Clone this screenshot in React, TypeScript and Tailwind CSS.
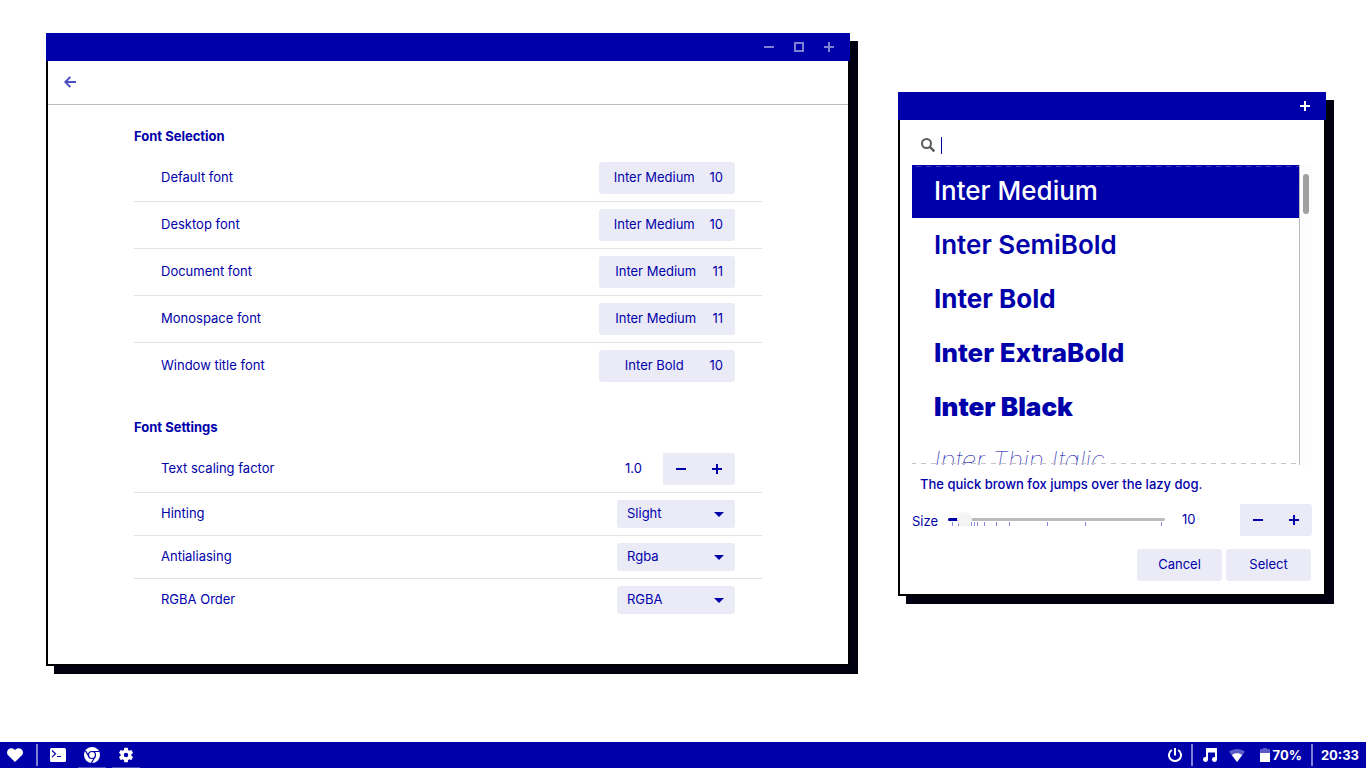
import { useState } from "react";
import type { ReactNode } from "react";

const FONT_ROWS = [
  { label: "Default font", name: "Inter Medium", size: 10 },
  { label: "Desktop font", name: "Inter Medium", size: 10 },
  { label: "Document font", name: "Inter Medium", size: 11 },
  { label: "Monospace font", name: "Inter Medium", size: 11 },
  { label: "Window title font", name: "Inter Bold", size: 10 },
];

const SELECT_ROWS = [
  { id: "hinting", label: "Hinting", options: ["Slight", "None", "Medium", "Full"] },
  { id: "antialiasing", label: "Antialiasing", options: ["Rgba", "Grayscale", "None"] },
  { id: "rgba-order", label: "RGBA Order", options: ["RGBA", "BGR", "VRGB", "VBGR"] },
];

const FONT_LIST = [
  { name: "Inter Medium", style: "font-medium" },
  { name: "Inter SemiBold", style: "font-semibold" },
  { name: "Inter Bold", style: "font-bold" },
  { name: "Inter ExtraBold", style: "font-extrabold" },
  { name: "Inter Black", style: "font-black" },
  { name: "Inter Thin Italic", style: "font-thin italic" },
];

const MIN_SIZE = 6;
const MAX_SIZE = 72;
const SIZE_MARKS = [6, 8, 9, 10, 11, 12, 13, 14, 16, 20, 24, 36, 48, 72];

function MinusIcon() {
  return (
    <svg className="size-[10px]" viewBox="0 0 10 10" fill="currentColor" aria-hidden="true">
      <path d="M0 4h10v2H0z" />
    </svg>
  );
}

function PlusIcon() {
  return (
    <svg className="size-[10px]" viewBox="0 0 10 10" fill="currentColor" aria-hidden="true">
      <path d="M4 0h2v4h4v2H6v4H4V6H0V4h4z" />
    </svg>
  );
}

function SquareIcon() {
  return (
    <svg className="size-[10px]" viewBox="0 0 10 10" fill="none" stroke="currentColor" strokeWidth={2} aria-hidden="true">
      <path d="M1 1h8v8H1z" />
    </svg>
  );
}

function Window({
  label,
  className,
  controls,
  children,
}: {
  label: string;
  className: string;
  controls: ReactNode;
  children: ReactNode;
}) {
  return (
    <section aria-label={label} className={`absolute shadow-[8px_8px_0_0_#000010] ${className}`}>
      <div className="flex h-7 items-center justify-end gap-5 bg-[#0000aa] px-4">
        {controls}
      </div>
      <div className="border-x-2 border-b-2 border-black bg-white">{children}</div>
    </section>
  );
}

function StepButtons({ onStep }: { onStep: (delta: number) => void }) {
  return (
    <div className="flex h-8 overflow-hidden rounded-r-[3px] bg-[#ebebf7]">
      <button
        type="button"
        aria-label="Decrease"
        onClick={() => onStep(-1)}
        className="flex w-9 items-center justify-center"
      >
        <MinusIcon />
      </button>
      <button
        type="button"
        aria-label="Increase"
        onClick={() => onStep(1)}
        className="flex w-9 items-center justify-center"
      >
        <PlusIcon />
      </button>
    </div>
  );
}

function Row({ children }: { children: ReactNode }) {
  return (
    <div className="flex items-center justify-between border-b border-[#e2e2e2] px-[27px] py-[7px] last:border-b-0">
      {children}
    </div>
  );
}

function FontSettings() {
  const [scale, setScale] = useState(1);

  return (
    <Window
      label="Fonts"
      className="top-[33px] left-[46px] w-[804px]"
      controls={
        <div className="flex gap-5 text-[#8080d5]">
          <button type="button" aria-label="Minimize"><MinusIcon /></button>
          <button type="button" aria-label="Maximize"><SquareIcon /></button>
          <button type="button" aria-label="Close"><PlusIcon /></button>
        </div>
      }
    >
      <div className="flex h-11 items-center border-b border-[#bbbbbb] px-4 pb-[2px]">
        <button type="button" aria-label="Back" className="text-[#4d4dc4]">
          <svg className="size-3" viewBox="0 0 12 12" fill="none" stroke="currentColor" strokeWidth={2} aria-hidden="true">
            <path d="M12 6H1.5M6.3 0.9L1.3 6l5 5.1" />
          </svg>
        </button>
      </div>
      <div className="mx-[86px] pt-[19px] pb-[43px]">
        <h2 className="mb-[7px] leading-6 font-bold">Font Selection</h2>
        <div className="mb-[26px]">
          {FONT_ROWS.map((row) => (
            <Row key={row.label}>
              <span>{row.label}</span>
              <button
                type="button"
                aria-label={`${row.label}: ${row.name} ${row.size}`}
                className="flex h-8 w-[136px] items-center rounded-[3px] bg-[#ebebf7] px-3"
              >
                <span className="flex-1 text-center whitespace-nowrap">{row.name}</span>
                <span className="ml-3">{row.size}</span>
              </button>
            </Row>
          ))}
        </div>
        <h2 className="mb-[7px] leading-6 font-bold">Font Settings</h2>
        <div>
          <Row>
            <label htmlFor="scaling">Text scaling factor</label>
            <div className="flex">
              <input
                id="scaling"
                value={scale.toFixed(1)}
                readOnly
                className="w-[46px] pl-2 outline-none"
              />
              <StepButtons onStep={(d) => setScale((s) => s + d / 10)} />
            </div>
          </Row>
          {SELECT_ROWS.map((row) => (
            <Row key={row.id}>
              <label htmlFor={row.id}>{row.label}</label>
              <div className="relative">
                <select
                  id={row.id}
                  className="block h-7 w-[118px] appearance-none rounded-[3px] bg-[#ebebf7] pl-[10px] outline-none"
                >
                  {row.options.map((o) => (
                    <option key={o}>{o}</option>
                  ))}
                </select>
                <svg
                  className="pointer-events-none absolute top-3 right-[11px] h-[5px] w-[10px]"
                  viewBox="0 0 10 5"
                  fill="currentColor"
                  aria-hidden="true"
                >
                  <path d="M0 0h10L5 5z" />
                </svg>
              </div>
            </Row>
          ))}
        </div>
      </div>
    </Window>
  );
}

function FontChooser() {
  const [size, setSize] = useState(10);
  const [selected, setSelected] = useState("Inter Medium");
  const percent = ((size - MIN_SIZE) / (MAX_SIZE - MIN_SIZE)) * 100;

  return (
    <Window
      label="Pick a font"
      className="top-[92px] left-[898px] w-[428px]"
      controls={
        <button type="button" aria-label="Close" className="text-white"><PlusIcon /></button>
      }
    >
      <div className="px-3 pb-[13px]">
        <div className="flex h-[45px] items-center pt-[5px] pl-[9px]">
          <svg className="size-[14px]" viewBox="0 0 14 14" fill="none" stroke="#5a5a5a" strokeWidth={2} aria-hidden="true">
            <circle cx="5.5" cy="5.5" r="4.5" />
            <path d="M8.8 8.8l4.6 4.6" strokeWidth={2.4} />
          </svg>
          <span className="ml-[6px] h-[17px] w-px bg-[#0000aa]" />
          <input type="search" aria-label="Search font name" className="min-w-0 flex-1 outline-none" />
        </div>

        <div className="flex h-[300px]">
          <div className="relative flex-1 overflow-hidden border-r border-[#bbbbbb]">
            <ul className="text-[26px]">
              {FONT_LIST.map((f) => (
                <li key={f.name}>
                  <button
                    type="button"
                    onClick={() => setSelected(f.name)}
                    className={`flex w-full items-center pb-[2px] pl-[22px] whitespace-nowrap ${f.style} ${
                      f.name === selected ? "h-[53px] bg-[#0000aa] text-white" : "h-[54px]"
                    }`}
                  >
                    {f.name}
                  </button>
                </li>
              ))}
            </ul>
            {/* overflow hints at both ends of the list */}
            <div className="pointer-events-none absolute inset-x-0 top-px h-px bg-[repeating-linear-gradient(90deg,transparent_0_4px,#3c3cc2_4px_9px,transparent_9px_10px)]" />
            <div className="pointer-events-none absolute inset-x-0 bottom-px h-px bg-[repeating-linear-gradient(90deg,#c4c4c4_0_4px,transparent_4px_9px,#c4c4c4_9px_10px)]" />
          </div>
          <div className="w-3 bg-[#fcfcfc] pt-[9px] pl-[3px]">
            <div className="h-10 w-[6px] rounded-full bg-[#a0a0a0]" />
          </div>
        </div>

        <p className="h-[39px] pl-2 leading-[39px] font-medium">
          The quick brown fox jumps over the lazy dog.
        </p>

        <div className="flex h-8 items-center">
          <label htmlFor="size" className="w-9 pt-1">Size</label>
          <div className="relative h-8 flex-1">
            <div className="mt-[14px] h-[3px] overflow-hidden rounded-full bg-[#bbbbbb]">
              <div className="h-full bg-[#0000aa]" style={{ width: `${percent}%` }} />
            </div>
            <div className="absolute inset-x-1 top-[18px] h-1">
              {SIZE_MARKS.map((m) => (
                <span
                  key={m}
                  className="absolute h-1 w-px bg-[#8888d8]"
                  style={{ left: `${((m - MIN_SIZE) / (MAX_SIZE - MIN_SIZE)) * 100}%` }}
                />
              ))}
            </div>
            <input
              id="size"
              type="range"
              min={MIN_SIZE}
              max={MAX_SIZE}
              value={size}
              onChange={(e) => setSize(Number(e.target.value))}
              className="absolute inset-x-[-4px] top-2 h-[15px] appearance-none bg-transparent outline-none [&::-webkit-slider-thumb]:size-[15px] [&::-webkit-slider-thumb]:appearance-none [&::-webkit-slider-thumb]:rounded-full [&::-webkit-slider-thumb]:bg-[#f4f4f4]"
            />
          </div>
          <input
            aria-label="Font size"
            value={size}
            readOnly
            className="ml-[9px] w-[66px] pl-2 outline-none"
          />
          <StepButtons onStep={(d) => setSize((s) => Math.min(MAX_SIZE, Math.max(MIN_SIZE, s + d)))} />
        </div>

        <div className="mt-[13px] flex justify-end gap-1 pr-px">
          <button type="button" className="h-8 w-[85px] rounded-[3px] bg-[#ebebf7]">Cancel</button>
          <button type="button" className="h-8 w-[85px] rounded-[3px] bg-[#ebebf7]">Select</button>
        </div>
      </div>
    </Window>
  );
}

function Divider() {
  return <span className="h-[22px] w-[2px] bg-[#8080d5]" />;
}

function Taskbar() {
  return (
    <footer className="flex h-[26px] items-center justify-between bg-[#0000aa] px-[7px] font-bold text-white">
      <nav aria-label="Applications" className="flex h-full items-center">
        <button type="button" aria-label="Menu">
          <svg className="h-[14px] w-4" viewBox="0 0 16 14" fill="currentColor" aria-hidden="true">
            <path d="M8 14L1.4 7.6C-.4 5.8-.4 3 1.3 1.4 3-.3 5.8-.3 7.4 1.4L8 2l.6-.6c1.6-1.7 4.400-1.7 6.1 0C16.4 3 16.4 5.8 14.6 7.6z" />
          </svg>
        </button>
        <span className="mr-3 ml-[13px] flex"><Divider /></span>
        <button type="button" aria-label="Terminal">
          <svg className="h-[14px] w-4" viewBox="0 0 16 14" aria-hidden="true">
            <rect width="16" height="14" rx="1.5" fill="#fff" />
            <path d="M2 2.5l3.500 3.300L2 9.100M7 8.500h4" fill="none" stroke="#0000aa" strokeWidth="1.2" />
          </svg>
        </button>
        <button type="button" aria-label="Browser" className="ml-3 flex h-full w-7 items-center justify-center border-y border-t-transparent border-b-[#4d4dc4]">
          <svg className="size-4" viewBox="0 0 16 16" aria-hidden="true">
            <circle cx="8" cy="8" r="8" fill="#fff" />
            <g fill="none" stroke="#0000aa" strokeWidth="1.2">
              <circle cx="8" cy="8" r="3.5" />
              <path d="M8 4.5h7.200M5 9.800L1.400 3.600M11 9.800l-3.600 6.200" />
            </g>
          </svg>
        </button>
        <button type="button" aria-label="Settings" className="ml-[6px] flex h-full w-7 items-center justify-center border-y border-t-transparent border-b-[#4d4dc4]">
          <svg className="size-[18px]" viewBox="0 0 24 24" fill="currentColor" aria-hidden="true">
            <path d="M19.14 12.94c.04-.3.06-.61.06-.94s-.02-.64-.07-.94l2.03-1.58a.49.49 0 0 0 .12-.61l-1.92-3.32a.49.49 0 0 0-.59-.22l-2.39.96a7 7 0 0 0-1.62-.94l-.36-2.54A.48.48 0 0 0 13.92 2.400h-3.840a.48.48 0 0 0-.48.41l-.36 2.54c-.59.24-1.13.57-1.62.94l-2.39-.96a.48.48 0 0 0-.59.22L2.72 8.87a.48.48 0 0 0 .12.61l2.03 1.58c-.05.3-.07.62-.07.94s.02.64.07.94l-2.03 1.58a.49.49 0 0 0-.12.61l1.92 3.32c.12.22.37.29.59.22l2.39-.96c.5.38 1.03.7 1.62.94l.36 2.54c.05.24.24.41.48.41h3.840c.24 0 .44-.17.47-.41l.36-2.54c.59-.24 1.13-.56 1.62-.94l2.39.96c.22.08.47 0 .59-.22l1.92-3.32a.48.48 0 0 0-.12-.61zM12 15a3 3 0 1 1 0-6 3 3 0 0 1 0 6z" />
          </svg>
        </button>
      </nav>
      <div className="flex h-full items-center">
        <button type="button" aria-label="Power">
          <svg className="size-[14px]" viewBox="0 0 14 14" fill="none" stroke="currentColor" strokeWidth={2} aria-hidden="true">
            <path d="M7 0v7.500M3.800 2A6 6 0 1 0 10.200 2" />
          </svg>
        </button>
        <span className="mr-[9px] ml-[9px] flex"><Divider /></span>
        <button type="button" aria-label="Music">
          <svg className="h-[14px] w-[15px]" viewBox="0 0 15 14" fill="currentColor" aria-hidden="true">
            <path d="M4 0h11v11.500a2.500 2.500 0 1 1-2-2.450V4.500H6v7a2.500 2.500 0 1 1-2-2.450z" />
          </svg>
        </button>
        <svg className="ml-3 h-[13px] w-4" viewBox="0 0 16 13" fill="currentColor" role="img" aria-label="Wi-Fi">
          <path opacity=".35" d="M8 0C5 0 2.200 1 0 2.800L8 13l8-10.200C13.800 1 11 0 8 0z" />
          <path d="M8 4.200c-2 0-3.800.6-5.200 1.800L8 13l5.200-7C11.800 4.800 10 4.200 8 4.200z" />
        </svg>
        <svg className="ml-[15px] h-[14px] w-[10px]" viewBox="0 0 10 14" fill="currentColor" role="img" aria-label="Battery">
          <path opacity=".35" d="M3 0h4v1h3v4H0V1h3z" />
          <path d="M0 5h10v9H0z" />
        </svg>
        <span className="mr-[9px] ml-[3px] pt-px">70%</span>
        <Divider />
        <time className="ml-2 pt-px">20:33</time>
      </div>
    </footer>
  );
}

export default function App() {
  return (
    <div className="flex min-h-screen flex-col bg-white font-['Inter',sans-serif] text-[13px] text-[#0000aa]">
      <main className="relative flex-1">
        <FontSettings />
        <FontChooser />
      </main>
      <Taskbar />
    </div>
  );
}
